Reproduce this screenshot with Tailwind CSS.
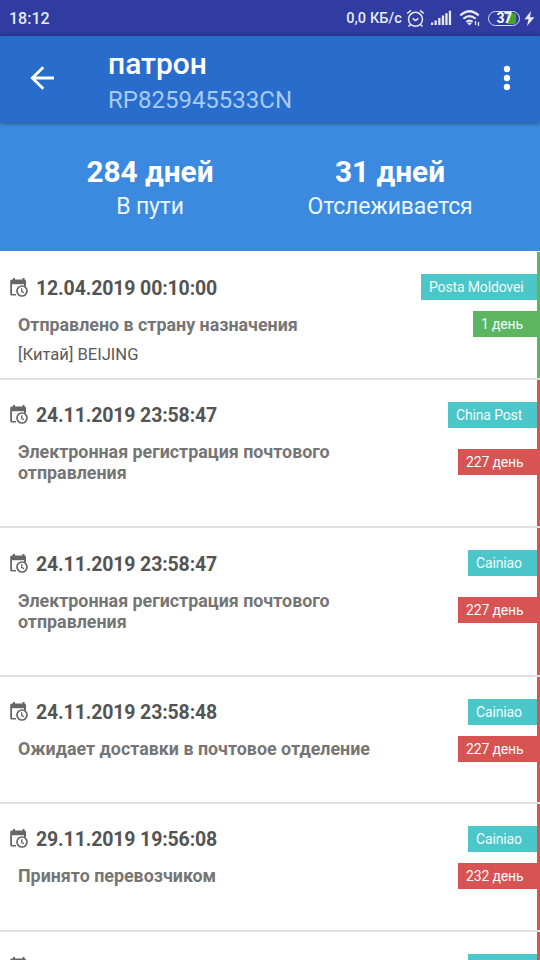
<!DOCTYPE html>
<html lang="ru">
<head>
<meta charset="utf-8">
<title>патрон</title>
<script src="https://cdn.jsdelivr.net/npm/@tailwindcss/browser@4"></script>
</head>
<body class="w-[540px] h-[960px] overflow-hidden bg-white font-['Roboto',sans-serif]">
<svg class="hidden">
  <symbol id="cal" viewBox="0 0 18 19">
    <path d="M3 0h2v1.500h7.500V0h2v1.500q1.500 0 1.500 1.500v5H14V5.500H2V16h4v1.500H1.700Q.2 17.500 .2 16V3Q.2 1.500 1.700 1.500H3z" fill="#666"/>
    <path d="M1 2.500h14v3.700H1z" fill="#666"/>
    <circle cx="12" cy="13" r="5" fill="#fff" stroke="#666" stroke-width="1.700"/>
    <path d="M11.700 10.200v3.100l2.300 1.500" fill="none" stroke="#666" stroke-width="1.300"/>
  </symbol>
</svg>
<div class="w-[540px] h-[960px] overflow-hidden flex flex-col">
  <div class="h-9 shrink-0 bg-[#303c9f] flex items-center text-[#e8eafa] font-medium pl-[9px] pr-[5px]">
    <span class="text-[16px] leading-9 pt-px">18:12</span>
    <span class="ml-auto text-[14.500px] tracking-[0.1px] leading-9 pt-px">0,0 КБ/с</span>
    <svg class="ml-1 w-[19px] h-[19px]" viewBox="0 0 19 19" fill="none" stroke="#e8eafa" stroke-width="1.500"><circle cx="9.500" cy="10.300" r="7"/><path d="M1.200 4.500 5 1.400M17.800 4.500 14 1.400M6.700 9.300l2.800 2.300 2.900-2.300M4.500 15.500l-2 2M14.500 15.500l2 2"/></svg>
    <svg class="ml-[5px] w-[22px] h-4" viewBox="0 0 22 16" fill="#e8eafa"><path d="M1 12.500h2.200V15H1zM4.500 10.500h2.300V15H4.500zM8.200 8h2.300v7H8.200zM11.800 5.500h2.300V15h-2.300zM15.300 3.200h2.300V15h-2.300zM18.800.8h2.300V15h-2.300z"/></svg>
    <svg class="ml-[7px] w-[23px] h-[18px]" viewBox="0 0 23 18" fill="none" stroke="#e8eafa" stroke-width="2.200"><path d="M1.300 6.500Q10.500-2 19.700 6.500M4.400 9.800q6.100-5.400 12.200 0M7.400 12.800q3.100-2.500 6.200 0"/><path d="M8.200 14.200q2.300-1.500 4.600 0l-2.300 2.400z" fill="#e8eafa" stroke="none"/><path d="M16.500 12v4M19.500 13v4" stroke-width="1.300"/></svg>
    <div class="ml-[6px] w-8 h-[15px] rounded-full border-[1.500px] border-[#d5dcf5] p-px">
      <div class="h-full rounded-full flex items-center justify-center text-[14px] tracking-[-0.5px] leading-none font-bold text-white bg-[linear-gradient(90deg,transparent_62%,#43a52c_62%,#43a52c_92%,transparent_92%)]">37</div>
    </div>
    <svg class="ml-[4px] w-[11px] h-[15px]" viewBox="0 0 11 15" fill="#e8eafa"><path d="M7 0 .5 8.300h4L3 15l7.500-8.800H6z"/></svg>
  </div>

  <header class="relative z-10 h-[86px] shrink-0 bg-[#286ccc] flex shadow-[0_1px_5px_rgba(0,0,0,0.45)]">
    <svg class="mt-[30px] ml-[30px] w-6 h-6" viewBox="0 0 24 24" fill="none" stroke="#fff" stroke-width="2.800"><path d="M13.300 1.200 2.300 12l11 10.800M2 12h22"/></svg>
    <div class="ml-[54px] flex flex-col whitespace-nowrap">
      <h1 class="mt-[10px] text-[30px] leading-[35px] font-medium text-white">патрон</h1>
      <span class="mt-[5px] text-[24px] leading-7 text-[#a7cbf8]">RP825945533CN</span>
    </div>
    <svg class="ml-auto mr-[29px] mt-[29px] w-2 h-[26px]" viewBox="0 0 8 26" fill="#fff"><circle cx="4" cy="4" r="3.200"/><circle cx="4" cy="13" r="3.200"/><circle cx="4" cy="22" r="3.200"/></svg>
  </header>

  <section class="h-[129px] shrink-0 bg-[#3b8ae0] grid grid-cols-2 px-[30px] text-center text-white pt-[32px]">
    <div>
      <div class="text-[29.800px] leading-[36px] font-bold">284 дней</div>
      <div class="text-[23px] tracking-[-0.15px] leading-[34px] text-[#e9f5ff]">В пути</div>
    </div>
    <div>
      <div class="text-[29.800px] leading-[36px] font-bold">31 дней</div>
      <div class="text-[23px] tracking-[-0.15px] leading-[34px] text-[#e9f5ff]">Отслеживается</div>
    </div>
  </section>

  <main id="list" class="pt-px"></main>
</div>
<script>
const rows = [
  ["12.04.2019 00:10:00", "Отправлено в страну назначения", "[Китай] BEIJING", "Posta Moldovei", 116, "1 день", 64, 128, "bg-[#5cb660]", "pt-[23px]", ""],
  ["24.11.2019 23:58:47", "Электронная регистрация почтового отправления", "", "China Post", 89, "227 день", 79, 148, "bg-[#d75452]", "pt-[22px]", ""],
  ["24.11.2019 23:58:47", "Электронная регистрация почтового отправления", "", "Cainiao", 69, "227 день", 79, 149, "bg-[#d75452]", "pt-[23px]", ""],
  ["24.11.2019 23:58:48", "Ожидает доставки в почтовое отделение", "", "Cainiao", 69, "227 день", 79, 127, "bg-[#d75452]", "pt-[22px]", ""],
  ["29.11.2019 19:56:08", "Принято перевозчиком", "", "Cainiao", 69, "232 день", 79, 128, "bg-[#d75452]", "pt-[22px]", ""],
  ["29.11.2019 23:53:08", "", "", "Cainiao", 69, "", 0, 128, "bg-[#d75452]", "pt-[22px]", "mt-[2px]"]
];
document.getElementById("list").innerHTML = rows.map(([date, status, place, carrier, cw, days, dw, h, color, top, dateTop]) => {
  const tall = h > 140;
  return `<article class="flex border-b-2 border-[#e0e0e0] whitespace-nowrap" style="height:${h}px">
    <div class="w-[400px] shrink-0 ${top}">
      <div class="flex items-start h-7 pl-[10px]">
        <svg class="w-[18px] h-[19px] mr-2 mt-[3px]"><use href="#cal"/></svg>
        <time class="text-[19.500px] tracking-[-0.140px] leading-7 font-bold text-[#545454] ${dateTop}">${date}</time>
      </div>
      <p class="mt-[11px] ml-[18px] w-[360px] whitespace-normal text-[17.850px] leading-[21px] font-bold text-[#757575]">${tall ? status.replace(" отправления", "<br>отправления") : status}</p>
      <p class="mt-[10px] ml-[18px] text-[16.600px] leading-5 text-[#5a5a5a]">${place}</p>
    </div>
    <div class="flex-1 flex flex-col items-end pt-[22px] text-[14px] tracking-[-0.150px] leading-[26px] text-[#f2fdfd]">
      <span class="h-[26px] bg-[#4bc6c9] pl-2" style="width:${cw}px">${carrier}</span>
      <span class="h-[26px] ${dw ? "pl-2" : ""} ${color} ${tall ? "mt-[21px]" : "mt-[11px]"}" style="width:${dw}px">${days}</span>
    </div>
    <div class="w-[3px] ${color}"></div>
  </article>`;
}).join("");
</script>
</body>
</html>
